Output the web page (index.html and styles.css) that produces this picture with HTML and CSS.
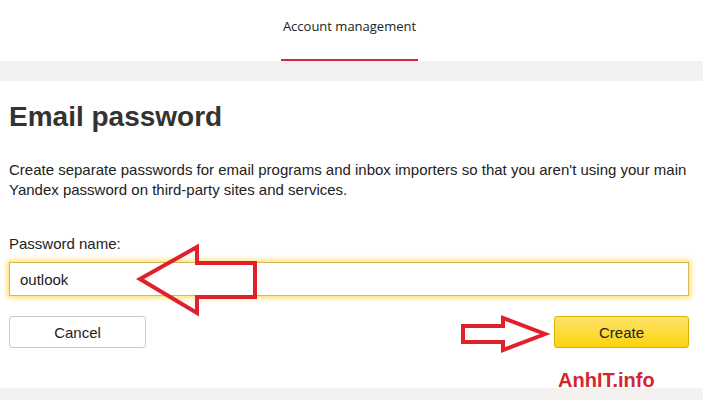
FILE: index.html
```html
<!DOCTYPE html>
<html lang="en">
<head>
<meta charset="utf-8">
<title>Email password</title>
<link rel="stylesheet" href="styles.css">
</head>
<body>
<div id="tabs"><span class="tab">Account management</span></div>
<div class="band"></div>

<div id="content">
 <h1>Email password</h1>
 <p class="intro">Create separate passwords for email programs and inbox importers so that you aren't using your main<br>Yandex password on third-party sites and services.</p>
 <label class="label" for="pname">Password name:</label>
 <div class="field"><input id="pname" type="text" value="outlook"></div>
 <div class="actions">
  <button class="btn">Cancel</button>
  <button class="btn btn-create">Create</button>
 </div>
</div>
<div class="band band-bottom"></div>

<svg class="marks" width="703" height="400" viewBox="0 0 703 400">
 <polygon points="140,279 197,247 197,263 255,263 255,297 197,297 197,313" />
 <polygon points="463,326 503,326 503,318 545,334 503,350 503,342 463,342" />
</svg>
<div class="stamp">AnhIT.info</div>
</body>
</html>
```
FILE: styles.css
```css
body{margin:0;padding:0;background-color:#ffffff;font-family:"Liberation Sans",Arial,sans-serif;font-size:14px;color:#000;position:relative;height:400px;overflow:hidden;}
#tabs{height:61px;text-align:center;}
.tab{display:inline-block;height:59px;line-height:52px;border-bottom:2px solid #d0283a;padding:0 2px;font-family:"Open Sans",sans-serif;font-size:13px;color:#222;margin-left:-4px;}
.band{height:20px;background-color:#f3f2f0;}
.band-bottom{height:12px;margin-top:0;}
#content{padding:0 14px 0 9px;height:307px;}
h1{margin:0;padding-top:18px;font-size:28px;line-height:36px;font-weight:bold;color:#333;}
.intro{margin:25px 0 0 0;font-size:15px;line-height:20px;color:#222;white-space:nowrap;}
.label{display:block;margin-top:34px;font-size:15px;line-height:20px;color:#222;}
.field{margin-top:8px;}
.field input{box-sizing:border-box;width:680px;height:34px;margin:0;padding:0 10px;border:1px solid #d4b85a;background:#fff;font-family:"Liberation Sans",Arial,sans-serif;font-size:15px;color:#222;outline:none;box-shadow:0 0 5px 2px rgba(255,214,60,.75);}
.actions{display:flex;justify-content:space-between;margin-top:20px;}
.btn{box-sizing:border-box;width:137px;height:32px;border:1px solid #cccccc;border-radius:3px;background:#fff;font-family:"Liberation Sans",Arial,sans-serif;font-size:15px;color:#222;padding:0;}
.btn-create{width:135px;border-color:#d9b100;background:linear-gradient(#ffe36b,#fcd20e);}
.marks{position:absolute;left:0;top:0;pointer-events:none;}
.marks polygon{fill:none;stroke:#e0202a;stroke-width:4;stroke-linejoin:miter;}
.stamp{position:absolute;left:558px;top:369px;font-weight:bold;font-size:20px;color:#d3262e;}
```
